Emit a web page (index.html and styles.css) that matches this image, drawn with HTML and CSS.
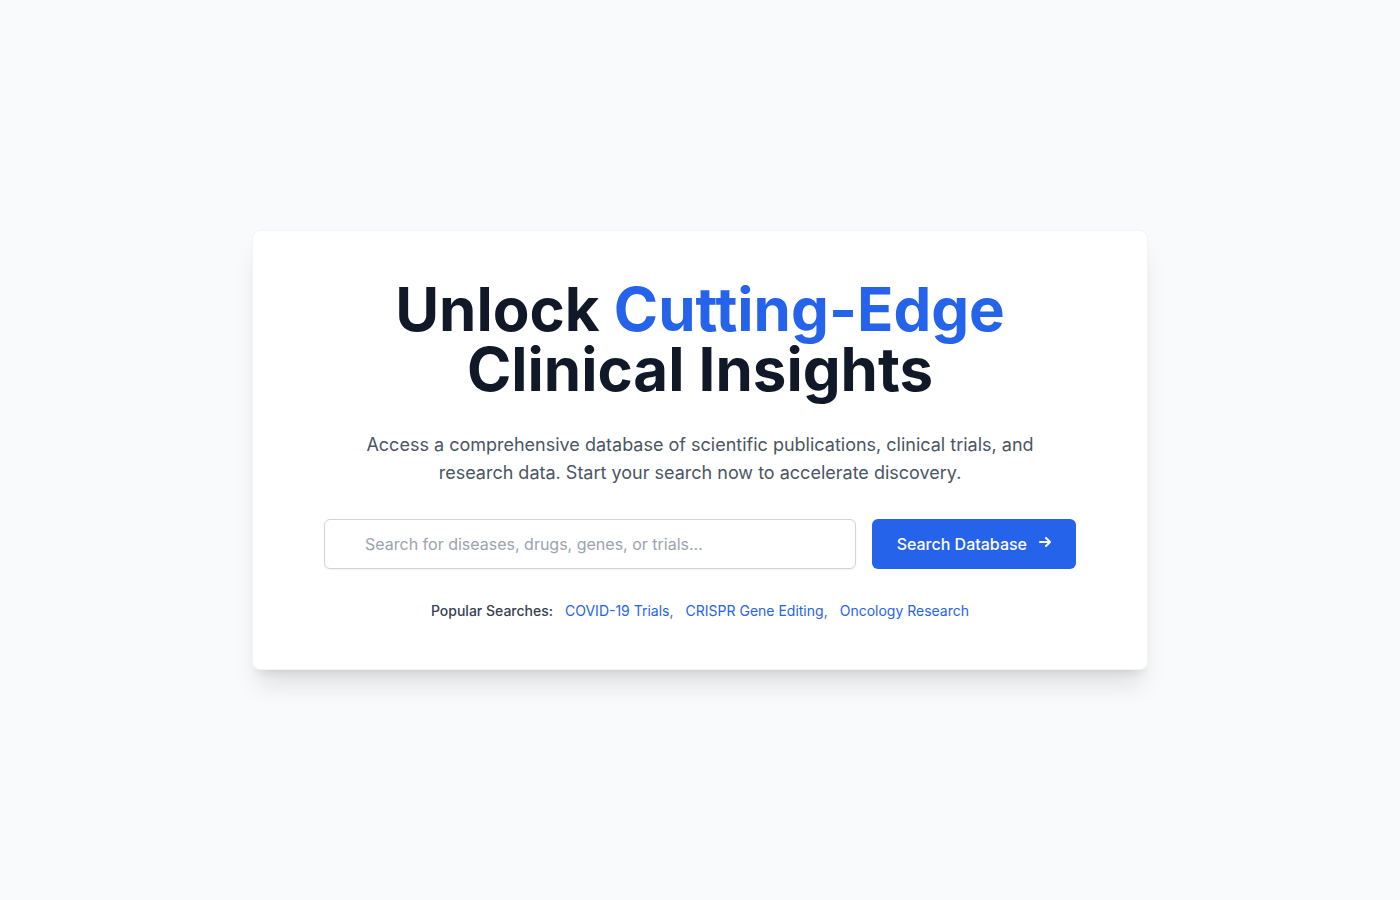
FILE: index.html
```html
<!DOCTYPE html>
<html lang="en">
<head>
    <meta charset="UTF-8">
    <meta name="viewport" content="width=device-width, initial-scale=1.0">
    <title>Clinical Insights Search</title>
    <link rel="stylesheet" href="styles.css">
</head>
<body>

    <main class="hero">
        <h1 class="hero-title">Unlock <span class="highlight">Cutting-Edge</span> Clinical Insights</h1>
        <p class="hero-text">
            Access a comprehensive database of scientific publications, clinical trials, and research data. Start your search now to accelerate discovery.
        </p>

        <form class="search-form" role="search">
            <input class="search-input" type="text" name="q" aria-label="Search the database" placeholder="Search for diseases, drugs, genes, or trials...">
            <button class="search-button" type="submit">
                Search Database
                <svg class="arrow" viewBox="0 0 16 16" fill="none" stroke="currentColor" stroke-width="2" stroke-linejoin="round" stroke-linecap="round" aria-hidden="true">
                    <path d="M5 6h10M11 2l4 4-4 4"/>
                </svg>
            </button>
        </form>

        <div class="popular">
            <span class="popular-label">Popular Searches:</span>
            <span><a href="#">COVID-19 Trials</a>,</span>
            <span><a href="#">CRISPR Gene Editing</a>,</span>
            <span><a href="#">Oncology Research</a></span>
        </div>
    </main>

</body>
</html>
```

FILE: styles.css
```css
* {
    box-sizing: border-box;
}

body {
    margin: 0;
    padding: 32px;
    min-height: 100vh;
    display: flex;
    align-items: center;
    justify-content: center;
    font-family: 'Inter', sans-serif;
    background-color: #f9fafb;
    color: #111827;
}

.hero {
    width: 100%;
    max-width: 896px;
    padding: 48px;
    background-color: white;
    border: 1px solid #f3f4f6;
    border-radius: 8px;
    box-shadow:
        0 20px 25px -5px rgba(0, 0, 0, 0.1),
        0 8px 10px -6px rgba(0, 0, 0, 0.1);
    text-align: center;
}

.hero-title {
    max-width: 768px;
    margin: 0 auto 32px;
    font-size: 60px;
    font-weight: 700;
    line-height: 60px;
}

.highlight {
    color: #2563eb;
}

.hero-text {
    max-width: 672px;
    margin: 0 auto 32px;
    font-size: 18px;
    line-height: 28px;
    color: #4b5563;
}

.search-form {
    display: flex;
    gap: 16px;
    max-width: 752px;
    margin: 0 auto 32px;
}

.search-input {
    flex: 1;
    min-width: 0;
    padding: 12px 16px 12px 40px;
    font-family: inherit;
    font-size: 16px;
    line-height: 24px;
    color: #111827;
    background-color: white;
    border: 1px solid #d1d5db;
    border-radius: 6px;
    box-shadow: 0 1px 2px rgba(0, 0, 0, 0.05);
}

.search-input::placeholder {
    color: #9ca3af;
}

.search-button {
    display: flex;
    align-items: center;
    gap: 8px;
    padding: 12px 24px;
    font-family: inherit;
    font-size: 16px;
    font-weight: 500;
    line-height: 24px;
    color: white;
    background-color: #2563eb;
    border: 1px solid transparent;
    border-radius: 6px;
    cursor: pointer;
}

.search-button:hover {
    background-color: #1d4ed8;
}

.arrow {
    width: 16px;
    height: 16px;
}

.popular {
    display: flex;
    flex-wrap: wrap;
    justify-content: center;
    gap: 12px;
    font-size: 14px;
    line-height: 20px;
    color: #6b7280;
}

.popular-label {
    font-weight: 500;
    color: #374151;
}

.popular a {
    color: #2563eb;
    text-decoration: none;
}

.popular a:hover {
    text-decoration: underline;
}
```
